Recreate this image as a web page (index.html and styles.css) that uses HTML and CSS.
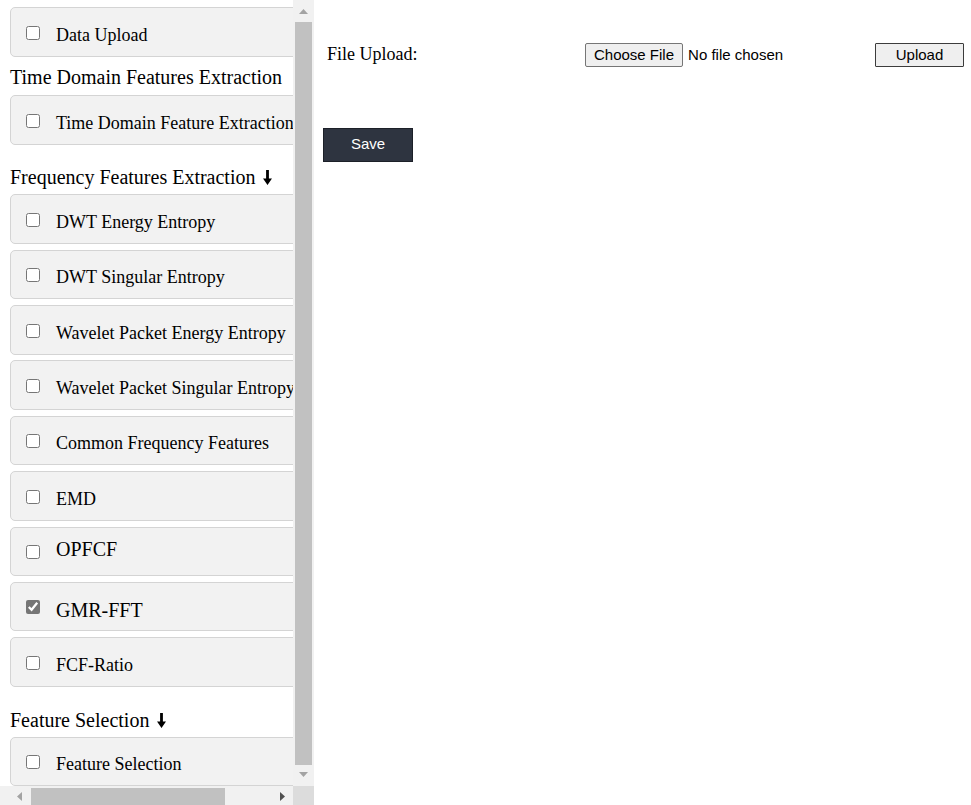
FILE: index.html
```html
<!DOCTYPE html>
<html lang="en">
<head>
<meta charset="utf-8">
<title>Feature Extraction</title>
<link rel="stylesheet" href="styles.css">
</head>
<body>
<aside class="sidebar">
  <div class="viewport">
    <div class="sidebar-inner">
      <label class="card"><input type="checkbox"><span class="lbl">Data Upload</span></label>
      <h2 class="sec sec-first">Time Domain Features Extraction</h2>
      <label class="card"><input type="checkbox"><span class="lbl">Time Domain Feature Extraction</span></label>
      <h2 class="sec">Frequency Features Extraction <svg class="arrow" viewBox="0 0 9 15" width="9" height="15"><path d="M3.1 0h2.8v8.4H9L4.5 15 0 8.4h3.1z"/></svg></h2>
      <label class="card"><input type="checkbox"><span class="lbl">DWT Energy Entropy</span></label>
      <label class="card"><input type="checkbox"><span class="lbl">DWT Singular Entropy</span></label>
      <label class="card"><input type="checkbox"><span class="lbl">Wavelet Packet Energy Entropy</span></label>
      <label class="card"><input type="checkbox"><span class="lbl">Wavelet Packet Singular Entropy</span></label>
      <label class="card"><input type="checkbox"><span class="lbl">Common Frequency Features</span></label>
      <label class="card"><input type="checkbox"><span class="lbl">EMD</span></label>
      <label class="card"><input type="checkbox"><span class="lbl lbl-lg lbl-up">OPFCF</span></label>
      <label class="card"><input type="checkbox" class="chk-on" checked><span class="lbl lbl-lg lbl-down">GMR-FFT</span></label>
      <label class="card"><input type="checkbox"><span class="lbl">FCF-Ratio</span></label>
      <h2 class="sec">Feature Selection <svg class="arrow" viewBox="0 0 9 15" width="9" height="15"><path d="M3.1 0h2.8v8.4H9L4.5 15 0 8.4h3.1z"/></svg></h2>
      <label class="card"><input type="checkbox"><span class="lbl">Feature Selection</span></label>
    </div>
  </div>
  <div class="vbar" aria-hidden="true">
    <span class="sb-btn sb-up"><svg viewBox="0 0 9 5" width="9" height="5"><path d="M0 5L4.5 0 9 5z"/></svg></span>
    <div class="vtrack"><span class="vthumb"></span></div>
    <span class="sb-btn sb-down"><svg viewBox="0 0 9 5" width="9" height="5"><path d="M0 0h9L4.5 5z"/></svg></span>
  </div>
  <div class="hbar" aria-hidden="true">
    <span class="sb-btn sb-left"><svg viewBox="0 0 5 9" width="5" height="9"><path d="M5 0v9L0 4.5z"/></svg></span>
    <div class="htrack"><span class="hthumb"></span></div>
    <span class="sb-btn sb-right"><svg viewBox="0 0 5 9" width="5" height="9"><path d="M0 0l5 4.5L0 9z"/></svg></span>
  </div>
  <div class="corner" aria-hidden="true"></div>
</aside>
<main class="main">
  <div class="upload-row">
    <span class="field-label">File Upload:</span>
    <input type="file" class="file-input">
    <button type="button" class="btn-upload">Upload</button>
  </div>
  <button type="button" class="btn-save">Save</button>
</main>
</body>
</html>
```
FILE: styles.css
```css
html, body {
  margin: 0;
  padding: 0;
}
body {
  display: flex;
  height: 805px;
  overflow: hidden;
  font-family: "Liberation Serif", "Times New Roman", serif;
  color: #000;
  background: #fff;
}

/* ---------- sidebar ---------- */
.sidebar {
  flex: 0 0 314px;
  display: grid;
  grid-template-columns: 293px 21px;
  grid-template-rows: 786px 19px;
  height: 805px;
}
.viewport {
  overflow: hidden;
}
.sidebar-inner {
  width: 366px;
  box-sizing: border-box;
  padding: 7px 0 1px 10px;
}
.card {
  display: flex;
  align-items: flex-start;
  height: 49.5px;
  box-sizing: border-box;
  margin: 0 0 5.9px 0;
  background: #f2f2f2;
  border: 1px solid #d4d4d4;
  border-radius: 5px;
  overflow: hidden;
}
.card:last-child {
  margin-bottom: 0;
}
.card input {
  flex: 0 0 auto;
  width: 14px;
  height: 14px;
  margin: 17.5px 0 0 15px;
}
.lbl {
  display: block;
  margin: 15.6px 0 0 16px;
  font-size: 18px;
  line-height: 22px;
  white-space: nowrap;
}
.lbl-lg {
  font-size: 20px;
}
.lbl-up {
  margin-top: 10.6px;
}
.lbl-down {
  margin-top: 16.4px;
}
.chk-on {
  accent-color: #767676;
}
.sec {
  margin: 21.75px 0 6px 0;
  font-size: 20px;
  line-height: 22px;
  font-weight: normal;
  white-space: nowrap;
}
.sec-first {
  margin-top: 9.75px;
  margin-bottom: 6.75px;
}
.arrow {
  vertical-align: -1px;
  margin-left: 3px;
}

/* scrollbars (drawn) */
.vbar {
  grid-column: 2;
  grid-row: 1;
  display: flex;
  flex-direction: column;
  background: #f1f1f1;
}
.hbar {
  grid-column: 1;
  grid-row: 2;
  display: flex;
  background: #f1f1f1;
}
.corner {
  grid-column: 2;
  grid-row: 2;
  background: #dcdcdc;
}
.sb-btn {
  display: flex;
  flex: 0 0 auto;
  fill: #a3a3a3;
}
.sb-btn svg {
  display: block;
}
.sb-up {
  height: 17px;
  justify-content: center;
  align-items: flex-start;
  padding-top: 9px;
  box-sizing: border-box;
}
.sb-down {
  height: 17px;
  justify-content: center;
  align-items: flex-start;
  padding-top: 3px;
  box-sizing: border-box;
}
.vtrack {
  flex: 1 1 auto;
  display: flex;
  padding: 5px 2px 4px 2px;
}
.vthumb {
  flex: 1 1 auto;
  background: #c1c1c1;
}
.sb-left {
  width: 29px;
  padding: 6px 0 0 17px;
  box-sizing: border-box;
}
.sb-right {
  width: 17px;
  padding: 6px 0 0 4px;
  box-sizing: border-box;
  fill: #505050;
}
.htrack {
  flex: 1 1 auto;
  display: flex;
  padding: 2px 0 0 2px;
}
.hthumb {
  width: 194px;
  background: #c1c1c1;
}

/* ---------- main ---------- */
.main {
  flex: 1 1 auto;
  padding: 43px 7px 0 9px;
}
.upload-row {
  display: grid;
  grid-template-columns: 258px 290px 89px;
  align-items: baseline;
  padding-left: 4px;
}
.field-label {
  font-size: 18px;
}
.file-input {
  font: 15px "Liberation Sans", Arial, sans-serif;
  color: #000;
}
.file-input::file-selector-button {
  font: inherit;
  line-height: 18px;
  padding: 2px 8px;
  margin-right: 5px;
  border: 1px solid #767676;
  border-radius: 2px;
  background: #efefef;
  color: #000;
}
.btn-upload {
  width: 89px;
  height: 24px;
  padding: 0;
  font: 15px "Liberation Sans", Arial, sans-serif;
  line-height: 18px;
  color: #000;
  background: #efefef;
  border: 1px solid #3c3c3c;
  border-radius: 1px;
}
.btn-save {
  display: block;
  margin-top: 61px;
  width: 90px;
  height: 34px;
  padding: 0 0 3px 0;
  font: 15px "Liberation Sans", Arial, sans-serif;
  color: #fff;
  background: #2e3440;
  border: 1px solid #1c2028;
  border-radius: 0;
}
```
